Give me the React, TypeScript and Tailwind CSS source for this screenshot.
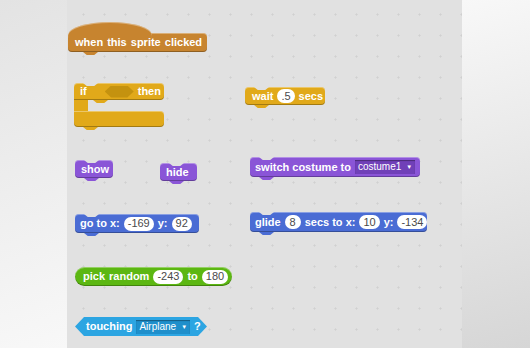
import React from "react";

type Kids = { children?: React.ReactNode };

const bevel =
  "shadow-[inset_0_1px_0_rgba(255,255,255,0.35),inset_0_-1px_0_rgba(0,0,0,0.28)]";
const trap = "[clip-path:polygon(0_0,100%_0,75%_100%,25%_100%)]";
const label = "shrink-0 whitespace-nowrap text-[11px] font-bold leading-none text-white";

function Notch() {
  return <span className={`absolute left-[9px] top-0 h-[3px] w-[15px] bg-[#e1e1e1] ${trap}`} />;
}

function Num({ children }: Kids) {
  return (
    <span className="inline-flex h-[14px] min-w-[16px] shrink-0 items-center justify-center rounded-full bg-white px-[4px] text-[11px] font-normal leading-none text-[#4a4a4a]">
      {children}
    </span>
  );
}

function Drop({ bg, children }: Kids & { bg: string }) {
  return (
    <span
      className={`inline-flex h-[14px] shrink-0 items-center gap-[5px] whitespace-nowrap px-[3px] text-[10px] font-normal leading-none text-white shadow-[inset_0_1px_1px_rgba(0,0,0,0.35)] ${bg}`}
    >
      {children}
      <span className="text-[6px]">▼</span>
    </span>
  );
}

function Stack({
  bg,
  pos,
  notch = true,
  children,
}: Kids & { bg: string; pos: string; notch?: boolean }) {
  return (
    <div className={`absolute flex items-center gap-[4px] rounded-[4px] pl-[5px] ${label} ${bevel} ${bg} ${pos}`}>
      {notch && <Notch />}
      {children}
      <span className={`absolute left-[9px] top-full h-[3px] w-[15px] ${trap} ${bg}`} />
    </div>
  );
}

export default function App() {
  return (
    <div className="flex h-[348px] w-[530px] overflow-hidden font-['Liberation_Sans',Arial,sans-serif]">
      <div className="h-full w-[67px] bg-[linear-gradient(160deg,#e3e3e3,#f8f8f8)]" />

      <div className="relative h-full w-[395px] bg-[#e1e1e1] bg-[radial-gradient(circle,#d0d0d0_0.8px,transparent_1.4px)] [background-position:6px_4px] [background-size:21px_21px]">
        {/* hat */}
        <div className={`absolute left-[1px] top-[33px] flex h-[19px] w-[139px] items-center rounded-[4px] bg-[#c7842f] pl-[7px] [word-spacing:1px] ${label} ${bevel}`}>
          <span className="absolute left-0 top-[-11px] h-[26px] w-[84px] rounded-[50%] bg-[#c7842f] shadow-[inset_0_1px_0_rgba(255,255,255,0.35)]" />
          <span className="relative">when this sprite clicked</span>
          <span className={`absolute left-[15px] top-full h-[3px] w-[15px] bg-[#c7842f] ${trap}`} />
        </div>

        {/* if then */}
        <div className="absolute left-[7px] top-[83px] w-[90px]">
          <div className={`relative flex h-[17px] items-center rounded-t-[4px] rounded-br-[4px] bg-[#e1a91a] pl-[6px] ${label} ${bevel}`}>
            <Notch />
            <span>if</span>
            <span className="ml-[18px] h-[12px] w-[29px] shrink-0 bg-[#c4920f] [clip-path:polygon(22%_0,78%_0,100%_50%,78%_100%,22%_100%,0_50%)]" />
            <span className="ml-[4px]">then</span>
            <span className={`absolute left-[19px] top-full h-[3px] w-[15px] bg-[#e1a91a] ${trap}`} />
          </div>
          <div className="h-[11px] w-[14px] bg-[#e1a91a]" />
          <div className={`relative h-[16px] rounded-b-[4px] rounded-tr-[4px] bg-[#e1a91a] ${bevel}`}>
            <span className={`absolute left-[9px] top-full h-[3px] w-[15px] bg-[#e1a91a] ${trap}`} />
          </div>
        </div>

        <Stack bg="bg-[#e1a91a]" pos="left-[178px] top-[87px] h-[18px] w-[80px] pl-[7px]">
          <span>wait</span>
          <Num>.5</Num>
          <span>secs</span>
        </Stack>

        <Stack bg="bg-[#8a55d7]" pos="left-[8px] top-[160px] h-[18px] w-[38px] pl-[6px]">
          <span>show</span>
        </Stack>
        <Stack bg="bg-[#8a55d7]" pos="left-[93px] top-[163px] h-[18px] w-[37px] pl-[6px]">
          <span>hide</span>
        </Stack>

        <Stack bg="bg-[#8a55d7]" pos="left-[183px] top-[157px] h-[20px] w-[170px]">
          <span>switch costume to</span>
          <Drop bg="bg-[#7040b8]">costume1</Drop>
        </Stack>

        <Stack bg="bg-[#4a6cd4]" pos="left-[8px] top-[214px] h-[19px] w-[124px]">
          <span>go to x:</span>
          <Num>-169</Num>
          <span>y:</span>
          <Num>92</Num>
        </Stack>

        <Stack bg="bg-[#4a6cd4]" pos="left-[183px] top-[212px] h-[20px] w-[177px]">
          <span>glide</span>
          <Num>8</Num>
          <span>secs to x:</span>
          <Num>10</Num>
          <span>y:</span>
          <Num>-134</Num>
        </Stack>

        <div className={`absolute left-[8px] top-[267px] flex h-[19px] w-[157px] items-center gap-[4px] rounded-full bg-[#5cb712] pl-[8px] [word-spacing:1px] ${label} ${bevel}`}>
          <span>pick random</span>
          <Num>-243</Num>
          <span>to</span>
          <Num>180</Num>
        </div>

        <div className={`absolute left-[8px] top-[317px] flex h-[19px] w-[132px] items-center gap-[4px] bg-[#2ca5e2] pl-[11px] ${label} [clip-path:polygon(9px_0,calc(100%_-_9px)_0,100%_50%,calc(100%_-_9px)_100%,9px_100%,0_50%)]`}>
          <span>touching</span>
          <Drop bg="bg-[#1f8fcb]">Airplane</Drop>
          <span>?</span>
        </div>
      </div>

      <div className="h-full w-[68px] bg-[linear-gradient(165deg,#f8f8f8,#d6d6d6)]" />
    </div>
  );
}
